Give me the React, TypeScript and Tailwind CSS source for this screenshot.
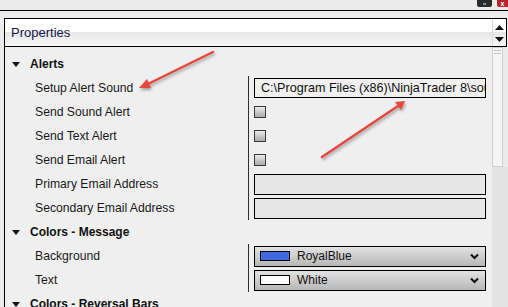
import React from 'react';

type Row =
  | { kind: 'header'; label: string }
  | { kind: 'path'; label: string; value: string }
  | { kind: 'check'; label: string }
  | { kind: 'text'; label: string }
  | { kind: 'color'; label: string; swatch: string; value: string };

const rows: Row[] = [
  { kind: 'header', label: 'Alerts' },
  { kind: 'path', label: 'Setup Alert Sound', value: 'C:\\Program Files (x86)\\NinjaTrader 8\\sounds\\Alert1.wav' },
  { kind: 'check', label: 'Send Sound Alert' },
  { kind: 'check', label: 'Send Text Alert' },
  { kind: 'check', label: 'Send Email Alert' },
  { kind: 'text', label: 'Primary Email Address' },
  { kind: 'text', label: 'Secondary Email Address' },
  { kind: 'header', label: 'Colors - Message' },
  { kind: 'color', label: 'Background', swatch: 'bg-[#4169e1]', value: 'RoyalBlue' },
  { kind: 'color', label: 'Text', swatch: 'bg-white', value: 'White' },
  { kind: 'header', label: 'Colors - Reversal Bars' },
];

function Caret() {
  return (
    <svg width="8" height="5" viewBox="0 0 8 5" className="shrink-0">
      <polygon points="0,0 8,0 4,5" fill="#111" />
    </svg>
  );
}

function ValueCell({ row }: { row: Row }) {
  if (row.kind === 'path') {
    return (
      <div className="h-[20px] w-[232px] border border-black bg-[#f0f0f0] pl-[6px] pr-[3px] overflow-hidden whitespace-nowrap text-[12.6px] leading-[18px] text-[#111]">
        {row.value}
      </div>
    );
  }
  if (row.kind === 'check') {
    return <div className="w-[12px] h-[12px] border border-[#3a3a3a] bg-gradient-to-b from-[#ececec] to-[#a9a9a9]" />;
  }
  if (row.kind === 'text') {
    return <div className="h-[21px] w-[232px] border border-black bg-[#e6e7e6]" />;
  }
  if (row.kind === 'color') {
    return (
      <div className="h-[21px] w-[232px] border border-black bg-gradient-to-b from-[#e2e2e2] via-[#cdcdcd] to-[#b7b7b7] flex items-center pl-[5px] pr-[6px]">
        <div className={`w-[30px] h-[10px] border border-black ${row.swatch}`} />
        <span className="ml-[7px] text-[12px] text-[#111] flex-1">{row.value}</span>
        <svg width="9" height="7" viewBox="0 0 9 7">
          <polyline points="1,1.5 4.5,5 8,1.5" fill="none" stroke="#111" strokeWidth="2" />
        </svg>
      </div>
    );
  }
  return null;
}

export default function App() {
  return (
    <div
      className="relative w-[508px] h-[307px] overflow-hidden bg-[#ececec] text-[#111]"
      style={{ fontFamily: '"Liberation Sans", Arial, sans-serif' }}
    >
      {/* top strip with window buttons */}
      <div className="h-[10px] flex justify-end items-start">
        <div className="w-[15px] h-[7px] bg-[#2b2b2b] rounded-b-[2px] flex items-center justify-center">
          <div className="w-[2px] h-[2px] bg-[#4a8be0]" />
          <div className="w-[1px] h-[2px] bg-[#e09040]" />
        </div>
        <div className="ml-[5px] w-[11px] h-[7px] bg-[#b3272a] rounded-bl-[2px] flex items-center justify-center text-white text-[7px] leading-none font-bold">
          x
        </div>
      </div>
      <div className="h-px bg-black" />

      {/* properties header */}
      <div className="pl-[4px] pt-[7px]">
        <div className="relative w-[503px] h-[29px] border border-black flex">
          <div className="flex-1 flex flex-col">
            <div className="h-[13px] bg-white" />
            <div className="flex-1 bg-gradient-to-b from-[#e6e6e6] to-[#f6f6f6]" />
            <div className="absolute left-[6px] top-[6px] text-[13px] leading-[16px] text-[#14144a]">Properties</div>
          </div>
          <div className="w-[14px] border-l border-[#dcdcdc] flex flex-col">
            <div className="h-[13px] bg-white flex items-end justify-center pb-[2px]">
              <svg width="9" height="5" viewBox="0 0 9 5">
                <polygon points="0,5 9,5 4.5,0" fill="#111" />
              </svg>
            </div>
            <div className="flex-1 bg-gradient-to-b from-[#e6e6e6] to-[#f6f6f6] flex items-start justify-center pt-[5px]">
              <svg width="9" height="5" viewBox="0 0 9 5">
                <polygon points="0,0 9,0 4.5,5" fill="#111" />
              </svg>
            </div>
          </div>
        </div>
      </div>

      {/* property grid */}
      <div className="ml-[4px] flex h-[260px] border-l border-black bg-[#eeefee]">
        <div className="flex-1 pt-[5px]">
          {rows.map((row, i) =>
            row.kind === 'header' ? (
              <div key={i} className="h-[24px] flex items-center pl-[7px] gap-[10px]">
                <Caret />
                <span className="text-[12px] font-bold text-[#111]">{row.label}</span>
              </div>
            ) : (
              <div key={i} className="h-[24px] flex items-center">
                <div className="w-[243px] pl-[30px] text-[12.2px] text-[#1a1a1a] whitespace-nowrap">{row.label}</div>
                <div className="w-px h-[24px] bg-[#2e2e2e]" />
                <div className="pl-[5px] flex items-center">
                  <ValueCell row={row} />
                </div>
              </div>
            )
          )}
        </div>
        {/* scrollbar */}
        <div className="w-[16px] bg-[#e3e3e3] flex">
          <div className="w-[11px] h-[120px] bg-[#f5f5f5] border border-[#cfcfcf] flex flex-col items-center pt-[2px] gap-[2px]">
            <div className="w-[7px] h-px bg-[#c4c4c4]" />
            <div className="w-[7px] h-px bg-[#c4c4c4]" />
          </div>
          <div className="flex-1 h-[120px] bg-[#ebebeb]" />
        </div>
      </div>

      {/* annotation arrows */}
      <svg className="absolute inset-0 pointer-events-none" width="508" height="307">
        <defs>
          <filter id="sh" x="-20%" y="-20%" width="140%" height="140%">
            <feDropShadow dx="1" dy="2" stdDeviation="1.5" floodColor="#000" floodOpacity="0.35" />
          </filter>
        </defs>
        <g filter="url(#sh)">
          <line x1="213" y1="52" x2="148" y2="84" stroke="#e5473f" strokeWidth="2.5" strokeLinecap="round" />
          <polygon points="139,88 147,79 151,88" fill="#e5473f" />
          <line x1="322" y1="157" x2="398" y2="106" stroke="#e5473f" strokeWidth="2.5" strokeLinecap="round" />
          <polygon points="405,101 395,102 401,110" fill="#e5473f" />
        </g>
      </svg>
    </div>
  );
}
